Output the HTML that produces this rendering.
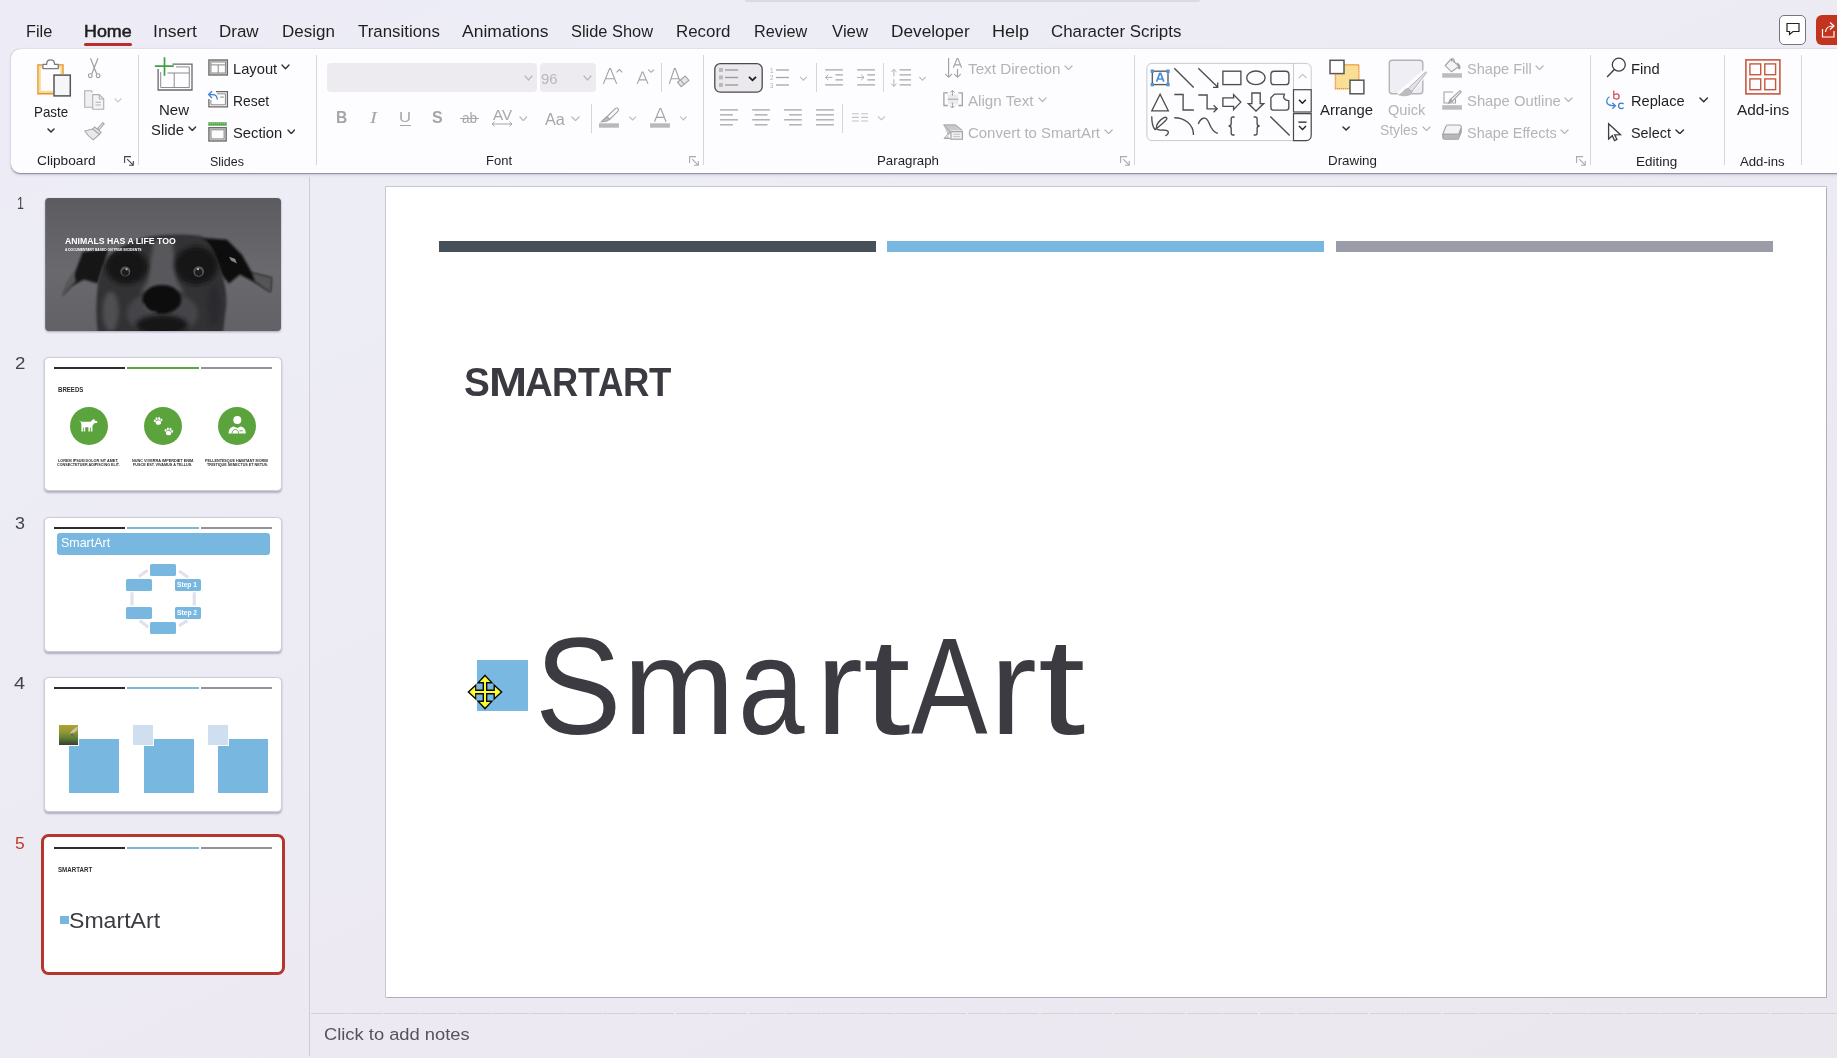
<!DOCTYPE html>
<html lang="en"><head><meta charset="utf-8"><title>PowerPoint</title>
<style>
html,body{margin:0;padding:0}
body{width:1837px;height:1058px;overflow:hidden;position:relative;background:linear-gradient(155deg,#edecf6 0%,#ededf6 22%,#ece9f2 62%,#eae7ef 100%);font-family:"Liberation Sans",sans-serif}
.b{position:absolute;display:block}
.l{display:inline-block;font-style:normal;transform-origin:0 0;line-height:1;vertical-align:baseline}
.t{position:absolute;white-space:nowrap;line-height:1;transform-origin:0 0;display:block}
</style></head>
<body>
<!-- s_ribbon -->
<div class="b" style="left:745.00px;top:0.00px;width:455.00px;height:2.00px;background:#dcd9e3;border-radius:0 0 3px 3px;"></div>
<span class="t" style="left:26.09px;top:23.00px;font-size:17.20px;color:#1f1f1f;transform:scaleX(0.9514);">File</span>
<span class="t" style="left:83.57px;top:23.00px;font-size:17.20px;color:#1f1f1f;transform:scaleX(1.0392);-webkit-text-stroke:.55px #1f1f1f;">Home</span>
<span class="t" style="left:152.62px;top:23.00px;font-size:17.20px;color:#1f1f1f;transform:scaleX(1.0226);">Insert</span>
<span class="t" style="left:219.34px;top:23.00px;font-size:17.20px;color:#1f1f1f;transform:scaleX(0.9875);">Draw</span>
<span class="t" style="left:282.24px;top:23.00px;font-size:17.20px;color:#1f1f1f;transform:scaleX(0.9883);">Design</span>
<span class="t" style="left:357.66px;top:23.00px;font-size:17.20px;color:#1f1f1f;transform:scaleX(0.9811);">Transitions</span>
<span class="t" style="left:462.00px;top:23.00px;font-size:17.20px;color:#1f1f1f;transform:scaleX(1.0183);">Animations</span>
<span class="t" style="left:570.86px;top:23.00px;font-size:17.20px;color:#1f1f1f;transform:scaleX(0.9541);">Slide Show</span>
<span class="t" style="left:675.65px;top:23.00px;font-size:17.20px;color:#1f1f1f;transform:scaleX(0.9816);">Record</span>
<span class="t" style="left:753.70px;top:23.00px;font-size:17.20px;color:#1f1f1f;transform:scaleX(0.9448);">Review</span>
<span class="t" style="left:831.92px;top:23.00px;font-size:17.20px;color:#1f1f1f;transform:scaleX(0.9758);">View</span>
<span class="t" style="left:890.62px;top:23.00px;font-size:17.20px;color:#1f1f1f;transform:scaleX(1.0038);">Developer</span>
<span class="t" style="left:991.55px;top:23.00px;font-size:17.20px;color:#1f1f1f;transform:scaleX(1.0516);">Help</span>
<span class="t" style="left:1051.16px;top:23.00px;font-size:17.20px;color:#1f1f1f;transform:scaleX(0.9817);">Character Scripts</span>
<div class="b" style="left:84.00px;top:43.00px;width:48.00px;height:2.80px;background:#b5302a;border-radius:1.5px;"></div>
<div class="b" style="left:1779.00px;top:15.00px;width:27.00px;height:30.00px;background:#fff;border:1px solid #77757c;border-radius:5px;box-sizing:border-box;"></div>
<svg class="b" style="left:1785.00px;top:21.00px;" width="16" height="16" viewBox="0 0 16 16"><path d="M2 2.5h12v8H8L4.5 13.5V10.5H2z" fill="none" stroke="#222" stroke-width="1.2" stroke-linejoin="miter"/></svg>
<div class="b" style="left:1816.00px;top:15.00px;width:30.00px;height:30.00px;background:#c2341f;border-radius:6px;"></div>
<svg class="b" style="left:1820.00px;top:21.00px;" width="18" height="18" viewBox="0 0 18 18"><path d="M2.5 8v8h11.5V10" fill="none" stroke="#fff" stroke-width="1.2"/><path d="M5.5 11c.5-4 3-6 7-6M10 1.5l4 3.5-4 3.5" fill="none" stroke="#fff" stroke-width="1.2" stroke-linejoin="round"/></svg>
<div class="b" style="left:11.20px;top:49.20px;width:1840.00px;height:124.20px;background:#fdfcfe;border-radius:9px 0 0 9px;box-shadow:0 .5px 1px rgba(40,35,55,.38),0 1.5px 3px rgba(90,80,110,.22);"></div>
<div class="b" style="left:138.00px;top:55.30px;width:1.00px;height:110.20px;background:#d6d4da;"></div>
<div class="b" style="left:316.00px;top:55.30px;width:1.00px;height:110.20px;background:#d6d4da;"></div>
<div class="b" style="left:703.10px;top:55.30px;width:1.00px;height:110.20px;background:#d6d4da;"></div>
<div class="b" style="left:1134.30px;top:55.30px;width:1.00px;height:110.20px;background:#d6d4da;"></div>
<div class="b" style="left:1589.90px;top:55.30px;width:1.00px;height:110.20px;background:#d6d4da;"></div>
<div class="b" style="left:1724.00px;top:55.30px;width:1.00px;height:110.20px;background:#d6d4da;"></div>
<div class="b" style="left:1800.90px;top:55.30px;width:1.00px;height:110.20px;background:#d6d4da;"></div>
<div class="b" style="left:660.90px;top:63.20px;width:1.00px;height:29.20px;background:#d6d4da;"></div>
<div class="b" style="left:816.00px;top:63.20px;width:1.00px;height:29.20px;background:#d6d4da;"></div>
<div class="b" style="left:883.00px;top:63.20px;width:1.00px;height:29.20px;background:#d6d4da;"></div>
<div class="b" style="left:591.30px;top:103.60px;width:1.00px;height:29.20px;background:#d6d4da;"></div>
<div class="b" style="left:842.10px;top:103.60px;width:1.00px;height:29.20px;background:#d6d4da;"></div>
<span class="t" style="left:36.81px;top:155.00px;font-size:12.60px;color:#1f1f1f;transform:scaleX(1.0881);">Clipboard</span>
<span class="t" style="left:209.94px;top:156.00px;font-size:12.60px;color:#1f1f1f;transform:scaleX(0.9872);">Slides</span>
<span class="t" style="left:486.26px;top:155.00px;font-size:12.60px;color:#1f1f1f;transform:scaleX(1.0320);">Font</span>
<span class="t" style="left:877.34px;top:155.00px;font-size:12.60px;color:#1f1f1f;transform:scaleX(1.0541);">Paragraph</span>
<span class="t" style="left:1327.53px;top:155.00px;font-size:12.60px;color:#1f1f1f;transform:scaleX(1.0597);">Drawing</span>
<span class="t" style="left:1636.32px;top:156.00px;font-size:12.60px;color:#1f1f1f;transform:scaleX(1.0691);">Editing</span>
<span class="t" style="left:1740.30px;top:156.00px;font-size:12.60px;color:#1f1f1f;transform:scaleX(1.0456);">Add-ins</span>
<svg class="b" style="left:124.00px;top:156.00px;" width="10" height="10" viewBox="0 0 10 10"><path d="M.6 7V.6H7M3.2 3.2l6 6M9.3 5v4.3H5" fill="none" stroke="#444" stroke-width="1.1"/></svg>
<svg class="b" style="left:689.30px;top:156.00px;" width="10" height="10" viewBox="0 0 10 10"><path d="M.6 7V.6H7M3.2 3.2l6 6M9.3 5v4.3H5" fill="none" stroke="#aaa" stroke-width="1.1"/></svg>
<svg class="b" style="left:1120.00px;top:156.00px;" width="10" height="10" viewBox="0 0 10 10"><path d="M.6 7V.6H7M3.2 3.2l6 6M9.3 5v4.3H5" fill="none" stroke="#aaa" stroke-width="1.1"/></svg>
<svg class="b" style="left:1576.30px;top:156.00px;" width="10" height="10" viewBox="0 0 10 10"><path d="M.6 7V.6H7M3.2 3.2l6 6M9.3 5v4.3H5" fill="none" stroke="#aaa" stroke-width="1.1"/></svg>
<span class="t" style="left:33.93px;top:105.00px;font-size:14.30px;color:#1f1f1f;transform:scaleX(0.9324);">Paste</span>
<svg class="b" style="left:46.50px;top:128.00px;" width="8" height="5" viewBox="0 0 8 5"><path d="M1 1 L4.00 4.00 L7.00 1" fill="none" stroke="#333" stroke-width="1.5" stroke-linecap="round" stroke-linejoin="round"/></svg>
<span class="t" style="left:159.40px;top:103.00px;font-size:14.30px;color:#1f1f1f;transform:scaleX(1.0499);">New</span>
<span class="t" style="left:150.93px;top:123.00px;font-size:14.30px;color:#1f1f1f;transform:scaleX(1.0383);">Slide</span>
<svg class="b" style="left:188.40px;top:125.80px;" width="8.6" height="5.6" viewBox="0 0 8.6 5.6"><path d="M1 1 L4.30 4.60 L7.60 1" fill="none" stroke="#333" stroke-width="1.4" stroke-linecap="round" stroke-linejoin="round"/></svg>
<span class="t" style="left:232.62px;top:62.00px;font-size:14.30px;color:#1f1f1f;transform:scaleX(1.0292);">Layout</span>
<svg class="b" style="left:281.00px;top:64.30px;" width="9" height="5.7" viewBox="0 0 9 5.7"><path d="M1 1 L4.50 4.70 L8.00 1" fill="none" stroke="#333" stroke-width="1.4" stroke-linecap="round" stroke-linejoin="round"/></svg>
<span class="t" style="left:232.69px;top:94.00px;font-size:14.30px;color:#1f1f1f;transform:scaleX(0.9693);">Reset</span>
<span class="t" style="left:233.14px;top:126.00px;font-size:14.30px;color:#1f1f1f;transform:scaleX(1.0321);">Section</span>
<svg class="b" style="left:286.50px;top:128.50px;" width="8.5" height="5.7" viewBox="0 0 8.5 5.7"><path d="M1 1 L4.25 4.70 L7.50 1" fill="none" stroke="#333" stroke-width="1.4" stroke-linecap="round" stroke-linejoin="round"/></svg>
<div class="b" style="left:327.40px;top:63.00px;width:209.60px;height:29.30px;background:#edebf0;border-radius:4px;"></div>
<div class="b" style="left:539.50px;top:63.00px;width:56.50px;height:29.30px;background:#edebf0;border-radius:4px;"></div>
<svg class="b" style="left:523.70px;top:75.20px;" width="9" height="6" viewBox="0 0 9 6"><path d="M1 1 L4.50 5.00 L8.00 1" fill="none" stroke="#b8b8b8" stroke-width="1.2" stroke-linecap="round" stroke-linejoin="round"/></svg>
<span class="t" style="left:540.63px;top:72.00px;font-size:14.60px;color:#b8b8b8;transform:scaleX(1.0224);">96</span>
<svg class="b" style="left:583.00px;top:75.20px;" width="9" height="6" viewBox="0 0 9 6"><path d="M1 1 L4.50 5.00 L8.00 1" fill="none" stroke="#b8b8b8" stroke-width="1.2" stroke-linecap="round" stroke-linejoin="round"/></svg>
<span class="t" style="left:336.49px;top:110.00px;font-size:16.00px;color:#a6a6a6;font-weight:700;transform:scaleX(0.9734);">B</span>
<span class="t" style="left:369.80px;top:109.00px;font-size:17.00px;color:#a6a6a6;font-style:italic;font-family:'Liberation Serif',serif;transform:scaleX(1.2235);">I</span>
<span class="t" style="left:399.25px;top:109.00px;font-size:15.50px;color:#a6a6a6;transform:scaleX(1.0753);">U</span>
<div class="b" style="left:400.00px;top:124.50px;width:10.80px;height:1.20px;background:#a6a6a6;"></div>
<span class="t" style="left:431.92px;top:109.00px;font-size:17.00px;color:#a6a6a6;font-weight:700;transform:scaleX(0.9412);">S</span>
<span class="t" style="left:462.46px;top:111.00px;font-size:14.00px;color:#a6a6a6;transform:scaleX(0.9709);">ab</span>
<div class="b" style="left:460.30px;top:118.30px;width:19.20px;height:1.10px;background:#a6a6a6;"></div>
<span class="t" style="left:492.50px;top:108.00px;font-size:14.50px;color:#a6a6a6;transform:scaleX(1.0441);">AV</span>
<svg class="b" style="left:491.00px;top:121.00px;" width="22" height="6" viewBox="0 0 22 6"><path d="M1 3h20M3.5 .7L1 3l2.5 2.3M18.5 .7L21 3l-2.5 2.3" fill="none" stroke="#a6a6a6" stroke-width="1"/></svg>
<svg class="b" style="left:519.40px;top:115.60px;" width="8.6" height="5.6" viewBox="0 0 8.6 5.6"><path d="M1 1 L4.30 4.60 L7.60 1" fill="none" stroke="#b8b8b8" stroke-width="1.2" stroke-linecap="round" stroke-linejoin="round"/></svg>
<span class="t" style="left:544.80px;top:111.00px;font-size:16.50px;color:#a6a6a6;transform:scaleX(0.9786);">Aa</span>
<svg class="b" style="left:571.00px;top:115.60px;" width="9" height="5.6" viewBox="0 0 9 5.6"><path d="M1 1 L4.50 4.60 L8.00 1" fill="none" stroke="#b8b8b8" stroke-width="1.2" stroke-linecap="round" stroke-linejoin="round"/></svg>
<span class="t" style="left:770.12px;top:68.00px;font-size:6.60px;color:#b0b0b0;transform:scaleX(0.9753);">1</span>
<span class="t" style="left:770.29px;top:75.00px;font-size:6.60px;color:#b0b0b0;transform:scaleX(0.9324);">2</span>
<span class="t" style="left:770.36px;top:83.00px;font-size:6.60px;color:#b0b0b0;transform:scaleX(0.8931);">3</span>
<span class="t" style="left:968.09px;top:62.00px;font-size:14.30px;color:#b4b4b4;transform:scaleX(1.0671);">Text Direction</span>
<svg class="b" style="left:1064.00px;top:64.80px;" width="9" height="5.6" viewBox="0 0 9 5.6"><path d="M1 1 L4.50 4.60 L8.00 1" fill="none" stroke="#b4b4b4" stroke-width="1.2" stroke-linecap="round" stroke-linejoin="round"/></svg>
<span class="t" style="left:968.40px;top:94.00px;font-size:14.30px;color:#b4b4b4;transform:scaleX(1.0611);">Align Text</span>
<svg class="b" style="left:1038.00px;top:97.00px;" width="9" height="5.6" viewBox="0 0 9 5.6"><path d="M1 1 L4.50 4.60 L8.00 1" fill="none" stroke="#b4b4b4" stroke-width="1.2" stroke-linecap="round" stroke-linejoin="round"/></svg>
<span class="t" style="left:967.65px;top:126.00px;font-size:14.30px;color:#b4b4b4;transform:scaleX(1.0450);">Convert to SmartArt</span>
<svg class="b" style="left:1103.80px;top:128.80px;" width="9.2" height="5.6" viewBox="0 0 9.2 5.6"><path d="M1 1 L4.60 4.60 L8.20 1" fill="none" stroke="#b4b4b4" stroke-width="1.2" stroke-linecap="round" stroke-linejoin="round"/></svg>
<span class="t" style="left:1320.40px;top:103.00px;font-size:14.30px;color:#1f1f1f;transform:scaleX(1.0420);">Arrange</span>
<svg class="b" style="left:1342.20px;top:126.30px;" width="8.2" height="5.1" viewBox="0 0 8.2 5.1"><path d="M1 1 L4.10 4.10 L7.20 1" fill="none" stroke="#333" stroke-width="1.5" stroke-linecap="round" stroke-linejoin="round"/></svg>
<span class="t" style="left:1387.74px;top:103.00px;font-size:14.30px;color:#b4b4b4;transform:scaleX(1.0197);">Quick</span>
<span class="t" style="left:1380.28px;top:123.00px;font-size:14.30px;color:#b4b4b4;transform:scaleX(0.9677);">Styles</span>
<svg class="b" style="left:1422.00px;top:125.80px;" width="9" height="5.6" viewBox="0 0 9 5.6"><path d="M1 1 L4.50 4.60 L8.00 1" fill="none" stroke="#b4b4b4" stroke-width="1.2" stroke-linecap="round" stroke-linejoin="round"/></svg>
<span class="t" style="left:1466.74px;top:62.00px;font-size:14.30px;color:#b4b4b4;transform:scaleX(1.0195);">Shape Fill</span>
<svg class="b" style="left:1535.40px;top:64.80px;" width="9.1" height="5.6" viewBox="0 0 9.1 5.6"><path d="M1 1 L4.55 4.60 L8.10 1" fill="none" stroke="#b4b4b4" stroke-width="1.2" stroke-linecap="round" stroke-linejoin="round"/></svg>
<span class="t" style="left:1466.73px;top:94.00px;font-size:14.30px;color:#b4b4b4;transform:scaleX(1.0358);">Shape Outline</span>
<svg class="b" style="left:1564.00px;top:97.00px;" width="9" height="5.6" viewBox="0 0 9 5.6"><path d="M1 1 L4.50 4.60 L8.00 1" fill="none" stroke="#b4b4b4" stroke-width="1.2" stroke-linecap="round" stroke-linejoin="round"/></svg>
<span class="t" style="left:1466.75px;top:126.00px;font-size:14.30px;color:#b4b4b4;transform:scaleX(1.0096);">Shape Effects</span>
<svg class="b" style="left:1560.00px;top:128.80px;" width="9" height="5.6" viewBox="0 0 9 5.6"><path d="M1 1 L4.50 4.60 L8.00 1" fill="none" stroke="#b4b4b4" stroke-width="1.2" stroke-linecap="round" stroke-linejoin="round"/></svg>
<span class="t" style="left:1630.52px;top:62.00px;font-size:14.30px;color:#1f1f1f;transform:scaleX(1.0334);">Find</span>
<span class="t" style="left:1630.53px;top:94.00px;font-size:14.30px;color:#1f1f1f;transform:scaleX(1.0238);">Replace</span>
<svg class="b" style="left:1698.60px;top:97.00px;" width="9.4" height="5.8" viewBox="0 0 9.4 5.8"><path d="M1 1 L4.70 4.80 L8.40 1" fill="none" stroke="#333" stroke-width="1.5" stroke-linecap="round" stroke-linejoin="round"/></svg>
<span class="t" style="left:1631.05px;top:126.00px;font-size:14.30px;color:#1f1f1f;transform:scaleX(1.0060);">Select</span>
<svg class="b" style="left:1675.00px;top:128.80px;" width="9.5" height="5.7" viewBox="0 0 9.5 5.7"><path d="M1 1 L4.75 4.70 L8.50 1" fill="none" stroke="#333" stroke-width="1.5" stroke-linecap="round" stroke-linejoin="round"/></svg>
<span class="t" style="left:1737.20px;top:103.00px;font-size:14.30px;color:#1f1f1f;transform:scaleX(1.0755);">Add-ins</span>
<!-- s_icons -->
<svg class="b" style="left:0;top:0" width="1837" height="180" viewBox="0 0 1837 180" fill="none" stroke-linecap="butt">
<path d="M42.500 64.900H38V93.700H53" stroke="#e8902c" stroke-width="1.5"/><path d="M43 66.700H39.800V91.900H53" stroke="#f8dc8e" stroke-width="2.1"/><path d="M58.500 64.900H62.900V74" stroke="#e8902c" stroke-width="1.500"/><path d="M58.500 66.700H61.200V74" stroke="#f8dc8e" stroke-width="2"/>
<path d="M42.900 68.600V64.400H46.600C46.600 61.600 48.300 59.900 50.600 59.900C52.900 59.900 54.600 61.600 54.600 64.400H58.300V68.600Z" fill="#fdfcfe" stroke="#7c7c7c" stroke-width="1.300" stroke-linejoin="round"/>
<rect x="54" y="75.100" width="16.300" height="20.800" fill="#f6f5f8" stroke="#555" stroke-width="1.500"/>
<g stroke="#9a9a9a" stroke-width="1.100"><path d="M90.500 58.300L96.600 73.800M98 58.300L91.900 73.800"/><circle cx="90.300" cy="75.700" r="1.900"/><circle cx="98.100" cy="75.700" r="1.900"/></g>
<g stroke="#b0b0b0" stroke-width="1.100"><path d="M92.200 107.300H84.700V90.800H91.200L92.600 92.200" fill="#f0eff2"/><path d="M92.700 94.600H99.300L103.700 99V109.300H92.700Z" fill="#f4f3f6"/><path d="M99.300 94.600V99H103.700M95.500 102.300H100.800M95.500 105H100.800"/></g>
<path d="M114.600 98.500L118 101.800L121.400 98.500" stroke="#c4c4c4" stroke-width="1.100"/>
<g stroke="#a8a8a8" stroke-width="1.100" fill="#e9e8ec"><path d="M103 122.600L104.200 123.800L99.200 129.800L97.600 128.400Z"/><path d="M94.600 127L101.200 132.300L99.300 134.400L92.800 129Z"/><path d="M92.800 129L84.800 131C87 134.500 90 137.800 93.200 139.800L99.300 134.400Z"/></g>
<g><path d="M172.500 64.100H192V90H158.100V69" stroke="#6a6a6a" stroke-width="1.300"/><path d="M176 66.900H189.300V87.500H160.700V72" stroke="#8d8d8d" stroke-width="1"/><path d="M167.500 73H189.300M174.200 73V87.500" stroke="#8d8d8d" stroke-width="1"/><path d="M154.900 66.200H173.800M164.500 57.200V75.800" stroke="#3f9e46" stroke-width="1.700"/></g>
<g><rect x="208.900" y="60" width="18.500" height="15" stroke="#666" stroke-width="1.300" fill="#d9d9db"/><rect x="210.900" y="62" width="14.500" height="11" stroke="#8a8a8a" stroke-width="1" fill="#fdfcfe"/><path d="M211 64.900H225.400M218.200 64.900V73" stroke="#8a8a8a" stroke-width="1"/></g>
<g><path d="M216 91.700H227.400V106.800H208.900V99" stroke="#666" stroke-width="1.300"/><path d="M217 93.800H225.400V104.800H210.900V100" stroke="#8a8a8a" stroke-width="1"/><path d="M220.200 97.100H223.800" stroke="#8a8a8a" stroke-width="1"/><path d="M208.700 94.600H212.500C215.600 94.600 217.300 96.600 217.300 99.600M212 91.200L208.600 94.600L212 98" stroke="#3d7fd0" stroke-width="1.300"/></g>
<g><rect x="208.200" y="122.200" width="18.600" height="3.500" fill="#55ab53"/><path d="M208.200 123.200H226.800" stroke="#bfe0a0" stroke-width=".8" stroke-dasharray="1 1"/><rect x="208.900" y="127.700" width="17.300" height="13.300" stroke="#666" stroke-width="1.300" fill="#d9d9db"/><rect x="211" y="129.800" width="13.100" height="9.100" stroke="#8a8a8a" stroke-width="1" fill="#fdfcfe"/></g>
<g stroke="#a3a3a3" stroke-width="1.150"><path d="M603.400 83.900L609.600 68.500H610.500L616.700 83.900M605.500 78.700H614.600"/><path d="M616.500 72.300L619.400 69.600L622.300 72.300"/><path d="M637.200 83.900L642.200 72H643L648 83.900M639 79.800H646.200"/><path d="M648.200 69.600L651.100 72.300L654 69.600"/><path d="M669.300 83.900L674.400 68.500H675.300L680.200 82M671.200 78.700H679"/><path d="M677.600 82.300L685.300 76L688.900 80.400L681.200 86.700Z" fill="#e6e5e9"/><path d="M680.500 80L684.100 84.400"/><path d="M615.200 108.700C616.300 107.700 617.500 108 618 108.600C618.600 109.300 618.700 110.400 617.800 111.300L609.600 119.400L607 116.800Z"/><path d="M607 116.800L609.600 119.400L606.400 121.300L601.500 121.800L605.300 118Z" fill="#bdbdbd"/><path d="M654.500 121.700L659.900 108.500H660.800L666.100 121.700M656.400 117.300H664.300"/></g>
<rect x="599" y="123.300" width="19.900" height="4.400" fill="#b9b9b9"/><rect x="650" y="123.300" width="19.900" height="4.400" fill="#b9b9b9"/>
<path d="M629.200 116.600L632.600 119.900L636 116.600M680.200 116.600L683.400 119.900L686.600 116.600" stroke="#bcbcbc" stroke-width="1.100"/>
<rect x="714.800" y="63.600" width="47.400" height="28.600" rx="5.500" fill="#ebe8ee" stroke="#4a4a4a" stroke-width="1.300"/>
<rect x="719" y="68.0" width="3.900" height="3.900" fill="#b9b9bb"/><path d="M725 70.0H738.100" stroke="#9c9c9c" stroke-width="1.400"/><rect x="719" y="75.5" width="3.900" height="3.900" fill="#b9b9bb"/><path d="M725 77.5H738.100" stroke="#9c9c9c" stroke-width="1.400"/><rect x="719" y="83.0" width="3.900" height="3.900" fill="#b9b9bb"/><path d="M725 85.0H738.100" stroke="#9c9c9c" stroke-width="1.400"/><path d="M749 76.900L752.500 80.300L756 76.900" stroke="#1a1a1a" stroke-width="1.800"/>
<path d="M776 70.0H789" stroke="#a6a6a6" stroke-width="1.300"/><path d="M776 77.5H789" stroke="#a6a6a6" stroke-width="1.300"/><path d="M776 85.0H789" stroke="#a6a6a6" stroke-width="1.300"/><path d="M800 76.800L803.400 80.200L806.800 76.800" stroke="#bcbcbc" stroke-width="1.100"/>
<g stroke="#a6a6a6" stroke-width="1.300"><path d="M825.200 69.900H842.900M835.400 74.800H842.900M835.400 79.800H842.900M825.200 84.900H842.900"/><path d="M857.100 69.900H875M867.300 74.800H875M867.300 79.800H875M857.100 84.900H875"/><path d="M899.600 69.900H911M899.600 74.800H911M899.600 79.800H911M899.600 84.900H911"/></g><g stroke="#b0b0b0" stroke-width="1"><path d="M825.600 77.400H832.400M828.400 74.600L825.600 77.400L828.400 80.200"/><path d="M857.100 77.400H864M861.200 74.600L864 77.400L861.200 80.200"/><path d="M893.900 69.300V76.300M891.300 71.900L893.900 69.300L896.500 71.900M893.900 79.200V86.300M891.300 83.700L893.900 86.300L896.500 83.700"/></g>
<path d="M919.200 76.800L922.500 80.100L925.800 76.800" stroke="#bcbcbc" stroke-width="1.100"/>
<g stroke="#a6a6a6" stroke-width="1.300"><path d="M720 109.90H738.0"/><path d="M752.2 109.90H769.9"/><path d="M784.1 109.90H801.800"/><path d="M816 109.90H833.900"/><path d="M720 114.85H732.9"/><path d="M754.6 114.85H767.5"/><path d="M789.1 114.85H801.800"/><path d="M816 114.85H833.900"/><path d="M720 119.80H738.0"/><path d="M752.2 119.80H769.9"/><path d="M784.1 119.80H801.800"/><path d="M816 119.80H833.900"/><path d="M720 124.80H732.9"/><path d="M754.6 124.80H767.5"/><path d="M789.1 124.80H801.800"/><path d="M816 124.80H833.900"/></g>
<g stroke="#c2c2c2" stroke-width="1.100"><path d="M852 113.7H858.800M861.200 113.7H867.900"/><path d="M852 117.4H858.800M861.200 117.4H867.900"/><path d="M852 121.0H858.800M861.200 121.0H867.900"/><path d="M878 116.500L881.400 119.800L884.800 116.500"/></g>
<g stroke="#a3a3a3" stroke-width="1.150"><path d="M948.600 58V77.300M945.200 73.900L948.600 77.300L952 73.900"/><path d="M953.300 67.800L957.100 58.600H957.900L961.600 67.800M954.600 64.800H960.400"/><path d="M957.500 69V77.300M954.300 74.100L957.500 77.300L960.700 74.100"/><rect x="947.800" y="94.300" width="10.600" height="10" fill="#eceaef" stroke="none"/><path d="M947.800 92.900H943.900V105.500H947.800M958.400 92.900H962.300V105.500H958.400" stroke-width="1.300"/><path d="M947.800 99.200H958.400M952.400 90.400V95.800M950.200 92.600L952.400 90.400L954.600 92.600M952.400 102.600V108M950.200 105.800L952.400 108L954.600 105.800" stroke-width="1"/><path d="M943.500 124.800H955.500L962.500 130.500H950.600V133.500L943.800 139H949.500" fill="#c9c9cb" stroke="none"/><path d="M943.600 124.900H955.500L962.300 130.400M943.600 124.900L950.300 131.700L944 138.400H950" stroke-width="1"/><rect x="950.900" y="131.700" width="11.500" height="7.500" fill="#f2f1f4" stroke-width="1.200"/><path d="M953.200 134.300H960.200M953.200 136.600H960.200" stroke-width=".9" stroke="#bdbdbd"/></g>
<rect x="1146.900" y="63.400" width="164.300" height="77.200" rx="5" fill="#fdfcfe" stroke="#cbc8d0" stroke-width="1"/>
<path d="M1293.500 63.400V89.400" stroke="#cbc8d0" stroke-width="1"/><rect x="1293.500" y="89.700" width="17.700" height="22.300" fill="#fdfcfe" stroke="#4a4a4a" stroke-width="1.200"/><path d="M1293.500 113.700H1311.200V135.600C1311.200 138.400 1309 140.600 1306.200 140.600H1293.500Z" fill="#fdfcfe" stroke="#4a4a4a" stroke-width="1.200"/><path d="M1298.700 78L1302.600 74.300L1306.500 78" stroke="#c6c6c6" stroke-width="1.100"/><path d="M1299 99.800L1302.400 103.200L1305.800 99.800" stroke="#1e1e1e" stroke-width="1.500"/><path d="M1298.400 122.200H1306.600M1299 126L1302.500 129.500L1306 126" stroke="#1e1e1e" stroke-width="1.300"/>
<g stroke="#4d4d4d" stroke-width="1.350" stroke-linejoin="miter"><rect x="1152.300" y="71.200" width="15.700" height="13.400" stroke="#5a5a5a"/><path d="M1174.300 68.300L1193.700 87.400"/><path d="M1198.300 68.300L1217.600 87.100M1217.700 82.500V87.300H1213"/><rect x="1222.900" y="71.200" width="18" height="13.400"/><ellipse cx="1255.900" cy="77.800" rx="9.200" ry="6.800"/><rect x="1270.900" y="71.200" width="18" height="13.400" rx="3.200"/><path d="M1160.100 94.300L1168.300 110.800H1151.800Z"/><path d="M1174.300 94.500H1183.100V110H1193.900"/><path d="M1198.300 95H1207.100V108.800H1217M1213.600 105.300L1217.200 108.800L1213.600 112.300"/><path d="M1222.900 97.900H1233.600V94.600L1240.800 102.100L1233.600 109.600V106.300H1222.900Z"/><path d="M1251.900 93H1260.200V103.600H1263.700L1256 111L1248.300 103.600H1251.900Z"/><path d="M1274.500 94.100H1284.500C1282.500 97.500 1284.500 100.600 1288.800 100.600V107.500C1288.800 109.100 1287.700 110.100 1286.200 110.100H1273.300C1271.800 110.100 1270.900 109.100 1270.900 107.500V97.800Z" stroke-linejoin="round"/><path d="M1151.800 116.800C1151.600 121 1152.600 127.500 1155.200 129.600C1158.500 127 1164.500 122 1166.600 119.400C1167.600 117.800 1166 116.600 1164 117.600C1160 119.600 1155.800 124.500 1156.400 128.200C1157 131.500 1162 129.200 1166.200 130.400C1169.600 131.400 1168.600 134.400 1165.800 135.600" stroke-linecap="round" stroke-linejoin="round"/><path d="M1174.300 117.700C1184.500 117.700 1193.500 124 1193.500 135"/><path d="M1198.300 124C1200.500 118.500 1205.500 114.500 1209 123C1211.500 129.500 1214 132.500 1217.900 133.300"/><path d="M1234.600 117H1233C1231.700 117 1231.200 117.800 1231.200 119V123.500C1231.200 125 1230.400 126 1228.600 126C1230.400 126 1231.200 127 1231.200 128.500V133C1231.200 134.200 1231.700 135 1233 135H1234.600"/><path d="M1253.700 117H1255.300C1256.600 117 1257.100 117.800 1257.100 119V123.500C1257.100 125 1257.900 126 1259.700 126C1257.900 126 1257.100 127 1257.100 128.500V133C1257.100 134.200 1256.600 135 1255.300 135H1253.700"/><path d="M1270.300 116.600L1289.700 135.400"/></g>
<rect x="1150.6" y="69.5" width="3.400" height="3.400" fill="#4f95dc"/><rect x="1166.3" y="69.5" width="3.400" height="3.400" fill="#4f95dc"/><rect x="1150.6" y="82.9" width="3.400" height="3.400" fill="#4f95dc"/><rect x="1166.3" y="82.9" width="3.400" height="3.400" fill="#4f95dc"/><path d="M1156.600 81.600L1159.700 73.400H1160.700L1163.800 81.600M1157.700 79H1162.700" stroke="#4a8fd8" stroke-width="1.700"/>
<rect x="1335.400" y="64.700" width="23.500" height="24" fill="#f9de95" stroke="#e9892f" stroke-width="1.400" stroke-dasharray="1.300 .7"/><rect x="1330" y="60.300" width="14" height="13.300" fill="#fdfcfe" stroke="#585858" stroke-width="1.500"/><rect x="1350" y="80.200" width="13.900" height="13.600" fill="#fdfcfe" stroke="#585858" stroke-width="1.500"/>
<rect x="1389.300" y="60.300" width="33.500" height="33.500" rx="3" fill="#efeef4" stroke="#b4b4b6" stroke-width="1.400"/><path d="M1397 96.500L1398 92.500L1404 86.500L1424 69.500L1428.500 70.500L1427 75L1412.500 93L1406 97.500Z" fill="#fdfcfe" stroke="none"/><path d="M1425.200 72.300C1426.300 71.500 1426.900 72.100 1426.200 73.200L1412.200 91.300C1410.700 91.200 1408.900 89.700 1408.400 88.200Z" fill="#e2e1e5" stroke="#b3b3b5" stroke-width="1"/><path d="M1408.400 88.200C1408.900 89.700 1410.700 91.200 1412.200 91.300C1412.400 94.800 1406.500 97.200 1398.600 94.800C1403 93.600 1402.800 89.500 1408.400 88.200Z" fill="#bdbdbf" stroke="#b0b0b2" stroke-width=".8"/>
<g stroke="#a3a3a3" stroke-width="1.100"><path d="M1451.200 58.800L1459 66.400L1451.400 71.800L1445.200 65.600Z" fill="#f3f2f5"/><path d="M1451.500 61.500C1451 59 1452.800 57.900 1453.800 59.300C1454.400 60.300 1454.400 62 1454.300 63"/><path d="M1457.500 63.500C1459 64 1460 65.500 1460 67.800C1460 69.200 1458.600 69.200 1458.500 67.800C1458.400 66.500 1458.500 65.500 1457.500 63.500Z" fill="#a8a8a8"/><path d="M1453 92H1444V103H1455.500V99" /><path d="M1459.400 91.200C1460.300 90.400 1461.500 91.500 1460.800 92.500L1452.500 101L1448.800 102.800L1450.500 99.300Z" fill="#f3f2f5"/><path d="M1448.800 102.800L1450.500 99.300L1452.500 101Z" fill="#a8a8a8"/><path d="M1447.500 125H1458.500C1460.500 125 1461.800 126.500 1461.200 128.300L1458.800 134.300H1442.800L1446 126.300C1446.300 125.500 1446.800 125 1447.500 125Z" fill="#f3f2f5"/><path d="M1442.800 134.300H1458.800L1461.200 128.300V132.300L1458.300 139.200H1444.500C1443.300 139.200 1442.800 138.500 1442.800 137.500Z" fill="#b8b8ba"/></g>
<rect x="1442.200" y="73.200" width="19.700" height="4.500" fill="#bcbcbc"/><rect x="1442.200" y="105.200" width="19.700" height="4.500" fill="#bcbcbc"/>
<circle cx="1618.800" cy="64.700" r="6.500" stroke="#3f3f3f" stroke-width="1.300"/><path d="M1614.300 69.500L1607.100 77" stroke="#3f3f3f" stroke-width="1.400"/>
<path d="M1613.800 90.500V98.800M1613.800 95.200C1614.600 94.200 1615.500 93.800 1616.500 93.800C1618.200 93.800 1619.100 95 1619.100 96.400C1619.100 97.800 1618.200 99 1616.500 99C1615.500 99 1614.600 98.600 1613.800 97.600" stroke="#d24b5c" stroke-width="1.250"/><path d="M1623.600 104C1622.900 103.300 1622.100 103 1621.200 103C1619.600 103 1618.600 104.200 1618.600 105.800C1618.600 107.400 1619.600 108.600 1621.200 108.600C1622.100 108.600 1622.900 108.300 1623.600 107.600" stroke="#2e7dd1" stroke-width="1.250"/><path d="M1609.500 96.800C1606.500 98.500 1606 102 1607.800 104C1609 105.400 1611 105.700 1615 105.700M1612.300 102.700L1615.400 105.700L1612.300 108.700" stroke="#3a84d6" stroke-width="1.250"/>
<path d="M1608.600 123.800V139L1612.300 135.700L1614.500 140.600L1616.900 139.500L1614.700 134.800L1620.500 134.700Z" fill="#fdfcfe" stroke="#3f3f3f" stroke-width="1.300" stroke-linejoin="miter"/>
<g stroke="#c8573d"><rect x="1745.900" y="59.900" width="34" height="34" stroke-width="1.600"/><rect x="1749.900" y="63.900" width="10.800" height="10.800" stroke-width="1.400"/><rect x="1764.800" y="63.900" width="10.800" height="10.800" stroke-width="1.400"/><rect x="1749.900" y="78.900" width="10.800" height="10.800" stroke-width="1.400"/><rect x="1764.800" y="78.900" width="10.800" height="10.800" stroke-width="1.400"/></g>
</svg>
<!-- s_panel -->
<span class="t" style="left:16.97px;top:195.00px;font-size:17.00px;color:#45434a;transform:scaleX(0.7302);">1</span>
<span class="t" style="left:14.67px;top:355.00px;font-size:17.00px;color:#45434a;transform:scaleX(1.0989);">2</span>
<span class="t" style="left:14.88px;top:515.00px;font-size:17.00px;color:#45434a;transform:scaleX(1.0526);">3</span>
<span class="t" style="left:14.30px;top:675.00px;font-size:17.00px;color:#45434a;transform:scaleX(1.1648);">4</span>
<span class="t" style="left:15.20px;top:835.00px;font-size:17.00px;color:#c0392b;transform:scaleX(1.0279);">5</span>
<svg class="b" style="left:44.90px;top:197.80px;filter:drop-shadow(0 1px 1.2px rgba(60,50,80,.4));" width="236.2" height="133" viewBox="0 0 237.4 133.8">
<defs>
<filter id="b1" x="-20%" y="-20%" width="140%" height="140%"><feGaussianBlur stdDeviation="1.1"/></filter>
<filter id="b2" x="-20%" y="-20%" width="140%" height="140%"><feGaussianBlur stdDeviation="2.2"/></filter>
<filter id="b3" x="-20%" y="-20%" width="140%" height="140%"><feGaussianBlur stdDeviation="0.6"/></filter>
<linearGradient id="dg" x1="0" y1="0" x2="0" y2="1"><stop offset="0" stop-color="#5c5b5f"/><stop offset=".55" stop-color="#6a696d"/><stop offset="1" stop-color="#626165"/></linearGradient>
<clipPath id="tc"><rect x="0" y="0" width="237.4" height="133.8" rx="4"/></clipPath>
</defs>
<g clip-path="url(#tc)">
<rect width="237.4" height="133.8" fill="url(#dg)"/>
<!-- ears -->
<path d="M64 51 L38 54 L30 75 L17 99 L26 89 L39 82 L53 86 Z" fill="#161617" filter="url(#b1)"/>
<path d="M17 99 L22 84 L29 74 L31 84 L25 90 Z" fill="#58575b" filter="url(#b1)"/>
<path d="M156 40 L183 42 L198 57 L208 75 L228 80 L227 95 L211 85 L196 77 L185 86 L178 78 Z" fill="#0e0e0f" filter="url(#b1)"/>
<path d="M208 75 L228 80 L227 95 L218 89 L211 84 Z" fill="#555458" filter="url(#b1)"/>
<path d="M185 59 L191 61 L193 66 L187 63 Z" fill="#8a898c" filter="url(#b3)"/>
<!-- head -->
<path d="M103 39 C120 36 140 36 156 38 C166 44 173 56 178 76 C182 90 184 104 181 118 L179 136 L53 136 C51 120 51 104 53 88 C55 72 62 58 73 52 C82 46 92 41 103 39 Z" fill="#333336" filter="url(#b1)"/>
<!-- centre stripe -->
<path d="M109 43 L128 43 L133 84 L140 95 L96 95 L103 84 Z" fill="#59595c" filter="url(#b2)"/>
<!-- eye patches -->
<ellipse cx="82" cy="69" rx="21" ry="17.500" fill="#151516" filter="url(#b2)"/>
<ellipse cx="152" cy="68" rx="21.500" ry="19" fill="#131314" filter="url(#b2)"/>
<!-- eyes -->
<circle cx="80.700" cy="74" r="5" fill="#58575a" filter="url(#b3)"/><circle cx="80.700" cy="74.800" r="3.400" fill="#1d1d1e" filter="url(#b3)"/><circle cx="82" cy="71.800" r="1.100" fill="#b5b5b7" filter="url(#b3)"/>
<circle cx="154.500" cy="74" r="5.300" fill="#58575a" filter="url(#b3)"/><circle cx="154.500" cy="74.800" r="3.600" fill="#1d1d1e" filter="url(#b3)"/><circle cx="153.800" cy="71.600" r="1.100" fill="#b5b5b7" filter="url(#b3)"/>
<!-- muzzle -->
<ellipse cx="118" cy="116" rx="36" ry="22" fill="#454548" filter="url(#b2)"/>
<ellipse cx="66" cy="114" rx="8" ry="20" fill="#505053" filter="url(#b2)"/>
<ellipse cx="170" cy="108" rx="7" ry="22" fill="#2c2c2e" filter="url(#b2)"/>
<!-- nose -->
<ellipse cx="117.500" cy="102" rx="19.500" ry="14.500" fill="#0b0b0c" filter="url(#b1)"/>
<path d="M99 106 C100 112 106 116 112 115" fill="none" stroke="#5e5e61" stroke-width="1.300" filter="url(#b1)"/>
<ellipse cx="117.500" cy="128" rx="26" ry="10" fill="#121212" filter="url(#b2)"/>
</g></svg>
<span class="t" style="left:65.28px;top:237.00px;font-size:9.20px;color:#fff;font-weight:700;transform:scaleX(0.9459);">ANIMALS HAS A LIFE TOO</span>
<span class="t" style="left:65.42px;top:248.00px;font-size:4.10px;color:#fff;font-weight:700;transform:scaleX(0.8132);">A DOCUMENTARY BASED ON TRUE INCIDENTS</span>
<div class="b" style="left:44.20px;top:357.10px;width:237.80px;height:134.40px;background:#fff;border-radius:4.5px;border:1px solid #cfccd6;box-sizing:border-box;box-shadow:0 1.5px 2px rgba(60,50,80,.32);"></div>
<div class="b" style="left:44.20px;top:517.40px;width:237.80px;height:134.40px;background:#fff;border-radius:4.5px;border:1px solid #cfccd6;box-sizing:border-box;box-shadow:0 1.5px 2px rgba(60,50,80,.32);"></div>
<div class="b" style="left:44.20px;top:677.20px;width:237.80px;height:134.40px;background:#fff;border-radius:4.5px;border:1px solid #cfccd6;box-sizing:border-box;box-shadow:0 1.5px 2px rgba(60,50,80,.32);"></div>
<div class="b" style="left:53.90px;top:366.80px;width:70.90px;height:2.30px;background:#2b2b30;"></div>
<div class="b" style="left:127.00px;top:366.80px;width:72.10px;height:2.30px;background:#5da33f;"></div>
<div class="b" style="left:201.00px;top:366.80px;width:71.20px;height:2.30px;background:#93939b;"></div>
<span class="t" style="left:57.80px;top:387.00px;font-size:6.60px;color:#2e2d33;font-weight:700;transform:scaleX(0.9244);">BREEDS</span>
<div class="b" style="left:69.90px;top:406.60px;width:38.00px;height:38.00px;background:#5ba33c;border-radius:50%;"></div>
<div class="b" style="left:143.90px;top:406.60px;width:38.00px;height:38.00px;background:#5ba33c;border-radius:50%;"></div>
<div class="b" style="left:218.10px;top:406.60px;width:38.00px;height:38.00px;background:#5ba33c;border-radius:50%;"></div>
<svg class="b" style="left:78.00px;top:418.00px;" width="22" height="15" viewBox="0 0 22 15"><path d="M1 2.2l2.3 1.6h9.2l2.6-2.6 1.3.1.3 1.3 2.8.9-.5 1.5-2.9.3-1.7 2.6v5.6h-1.6V9.6l-.9.1v3.8h-1.5V9.3H7.2v4.2H5.7V9.6l-.8.2v3.7H3.4V7.4L3 4.6z" fill="#fff"/></svg>
<svg class="b" style="left:150.00px;top:412.00px;" width="28" height="28" viewBox="0 0 28 28"><g fill="#fff"><g transform="translate(8.2,9) rotate(-8)"><ellipse cx="0" cy="1.6" rx="2.7" ry="2.2"/><ellipse cx="-3.3" cy="-.6" rx="1" ry="1.4"/><ellipse cx="-1.3" cy="-2.4" rx="1" ry="1.5"/><ellipse cx="1.3" cy="-2.4" rx="1" ry="1.5"/><ellipse cx="3.3" cy="-.6" rx="1" ry="1.4"/></g><g transform="translate(18.8,19.5) rotate(8)"><ellipse cx="0" cy="1.6" rx="2.7" ry="2.2"/><ellipse cx="-3.3" cy="-.6" rx="1" ry="1.4"/><ellipse cx="-1.3" cy="-2.4" rx="1" ry="1.5"/><ellipse cx="1.3" cy="-2.4" rx="1" ry="1.5"/><ellipse cx="3.3" cy="-.6" rx="1" ry="1.4"/></g></g></svg>
<svg class="b" style="left:226.00px;top:414.00px;" width="22" height="22" viewBox="0 0 22 22"><circle cx="11.3" cy="6" r="4" fill="#fff"/><path d="M2.6 19.6c0-4.6 2.4-6.6 5-7.2l3.6 1.6 3.6-1.6c2.7.6 5 2.600 5 7.200z" fill="#fff"/><path d="M6 19.400c.3-2.700 1.6-3.800 3.300-3.800s3.300 1.200 3.300 3.800M13.500 16.800h3.400" fill="none" stroke="#5ba33c" stroke-width=".9"/></svg>
<span class="t" style="left:58.05px;top:459.00px;font-size:3.95px;color:#2a2a2e;font-weight:700;transform:scaleX(0.9562);">LOREM IPSUM DOLOR SIT AMET,</span>
<span class="t" style="left:57.15px;top:463.00px;font-size:3.95px;color:#2a2a2e;font-weight:700;transform:scaleX(0.9388);">CONSECTETUER ADIPISCING ELIT.</span>
<span class="t" style="left:131.65px;top:459.00px;font-size:3.95px;color:#2a2a2e;font-weight:700;transform:scaleX(0.9677);">NUNC VIVERRA IMPERDIET ENIM.</span>
<span class="t" style="left:133.26px;top:463.00px;font-size:3.95px;color:#2a2a2e;font-weight:700;transform:scaleX(0.9469);">FUSCE EST. VIVAMUS A TELLUS.</span>
<span class="t" style="left:205.36px;top:459.00px;font-size:3.95px;color:#2a2a2e;font-weight:700;transform:scaleX(0.9420);">PELLENTESQUE HABITANT MORBI</span>
<span class="t" style="left:206.56px;top:463.00px;font-size:3.95px;color:#2a2a2e;font-weight:700;transform:scaleX(0.9371);">TRISTIQUE SENECTUS ET NETUS.</span>
<div class="b" style="left:53.90px;top:527.10px;width:70.90px;height:2.30px;background:#2b2b30;"></div>
<div class="b" style="left:127.00px;top:527.10px;width:72.10px;height:2.30px;background:#82b4d4;"></div>
<div class="b" style="left:201.00px;top:527.10px;width:71.20px;height:2.30px;background:#93939b;"></div>
<div class="b" style="left:57.10px;top:533.00px;width:212.90px;height:22.10px;background:#78b7e0;border-radius:3px;"></div>
<span class="t" style="left:60.74px;top:537.00px;font-size:12.40px;color:#fff;transform:scaleX(1.0055);">SmartArt</span>
<svg class="b" style="left:44.30px;top:517.10px;" width="237.4" height="133.8" viewBox="0 0 237.4 133.8"><g fill="none" stroke="#dde2ee" stroke-width="3.2"><path d="M95 59.500L103.500 53.200M135 54L144.200 60.300M150.300 75.200V88.600M88 75.200V88.600M95.700 103.600L104.200 110M135 108.600L143.500 103.600"/></g></svg>
<div class="b" style="left:150.30px;top:564.20px;width:26.20px;height:12.20px;background:#78b7e0;border-radius:1.6px;"></div>
<div class="b" style="left:126.10px;top:579.20px;width:26.20px;height:12.20px;background:#78b7e0;border-radius:1.6px;"></div>
<div class="b" style="left:175.20px;top:579.20px;width:26.20px;height:12.20px;background:#78b7e0;border-radius:1.6px;"></div>
<div class="b" style="left:126.10px;top:607.30px;width:26.20px;height:12.20px;background:#78b7e0;border-radius:1.6px;"></div>
<div class="b" style="left:175.20px;top:607.30px;width:26.20px;height:12.20px;background:#78b7e0;border-radius:1.6px;"></div>
<div class="b" style="left:150.30px;top:621.60px;width:26.20px;height:12.20px;background:#78b7e0;border-radius:1.6px;"></div>
<span class="t" style="left:177.40px;top:582.00px;font-size:6.90px;color:#fff;font-weight:700;transform:scaleX(0.9645);">Step 1</span>
<span class="t" style="left:177.40px;top:610.00px;font-size:6.90px;color:#fff;font-weight:700;transform:scaleX(0.9695);">Step 2</span>
<div class="b" style="left:53.90px;top:686.90px;width:70.90px;height:2.30px;background:#2b2b30;"></div>
<div class="b" style="left:127.00px;top:686.90px;width:72.10px;height:2.30px;background:#82b4d4;"></div>
<div class="b" style="left:201.00px;top:686.90px;width:71.20px;height:2.30px;background:#93939b;"></div>
<div class="b" style="left:69.10px;top:739.40px;width:50.00px;height:53.90px;background:#78b7e0;"></div>
<div class="b" style="left:144.00px;top:739.40px;width:50.00px;height:53.90px;background:#78b7e0;"></div>
<div class="b" style="left:218.00px;top:739.40px;width:50.00px;height:53.90px;background:#78b7e0;"></div>
<div class="b" style="left:132.90px;top:725.30px;width:20.20px;height:20.00px;background:#cfdff0;box-shadow:1px 1px 0 #fff;"></div>
<div class="b" style="left:208.10px;top:725.30px;width:20.20px;height:20.00px;background:#cfdff0;box-shadow:1px 1px 0 #fff;"></div>
<div class="b" style="left:58.90px;top:725.30px;width:19.10px;height:20.10px;background:linear-gradient(180deg,#b0a235 0%,#8f9a33 35%,#5f7f34 65%,#3b3d33 100%);box-shadow:1px 1px 0 #fff;"></div>
<svg class="b" style="left:58.90px;top:725.30px;" width="19.1" height="20.1" viewBox="0 0 19.1 20.1"><path d="M18.500 1.500C15 3 12 6 10.500 9.500l3 -.5 5-4z" fill="#d8c9b8" opacity=".85"/><path d="M10.500 9.500l3-1.700 1.500 3.500z" fill="#6b6a45"/></svg>
<div class="b" style="left:40.80px;top:833.90px;width:244.20px;height:141.20px;background:#fff;border:3px solid #b5362c;border-radius:7.5px;box-sizing:border-box;"></div>
<div class="b" style="left:54.10px;top:846.80px;width:70.60px;height:2.30px;background:#2b2b30;"></div>
<div class="b" style="left:127.10px;top:846.80px;width:71.60px;height:2.30px;background:#82b4d4;"></div>
<div class="b" style="left:201.10px;top:846.80px;width:70.80px;height:2.30px;background:#93939b;"></div>
<span class="t" style="left:57.71px;top:867.00px;font-size:6.70px;color:#2e2d33;font-weight:700;transform:scaleX(0.9235);">SMARTART</span>
<div class="b" style="left:59.90px;top:916.00px;width:8.70px;height:8.30px;background:#76b6df;"></div>
<span class="t" style="left:69.06px;top:911.00px;font-size:21.30px;color:#3c3b41;transform:scaleX(1.0838);">SmartArt</span>
<!-- s_slide -->
<div class="b" style="left:309.00px;top:177.00px;width:1.00px;height:879.00px;background:#cfccd6;"></div>
<div class="b" style="left:311.00px;top:1013.00px;width:1526.00px;height:1.00px;background:repeating-linear-gradient(90deg,#d5d2da 0 35px,transparent 35px 36.5px);"></div>
<span class="t" style="left:323.88px;top:1026.00px;font-size:17.20px;color:#55535a;transform:scaleX(1.0660);">Click to add notes</span>
<div class="b" style="left:385.50px;top:186.50px;width:1440.50px;height:810.30px;background:#fff;box-shadow:1px 1px 0 0 #b0aeb6,0 0 0 1px #c9c6cf;"></div>
<div class="b" style="left:438.80px;top:240.80px;width:437.00px;height:11.10px;background:#465058;"></div>
<div class="b" style="left:886.80px;top:240.80px;width:437.10px;height:11.10px;background:#77b7e0;"></div>
<div class="b" style="left:1335.90px;top:240.80px;width:436.90px;height:11.10px;background:#9a9ca7;"></div>
<span class="t" style="left:464.44px;top:362.00px;font-size:40.00px;color:#3b3a40;font-weight:700;"><i class="l" style="width:24.49px;transform:scaleX(0.9667)">S</i><i class="l" style="width:35.81px;transform:scaleX(1.1429)">M</i><i class="l" style="width:27.00px;transform:scaleX(0.9590)">A</i><i class="l" style="width:26.20px;transform:scaleX(0.9055)">R</i><i class="l" style="width:20.38px;transform:scaleX(0.8941)">T</i><i class="l" style="width:24.51px;transform:scaleX(0.8806)">A</i><i class="l" style="width:26.51px;transform:scaleX(0.9134)">R</i><i class="l" style="width:22.36px;transform:scaleX(0.9153)">T</i></span>
<div class="b" style="left:476.60px;top:660.00px;width:51.20px;height:50.60px;background:#78b8e1;"></div>
<span class="t" style="left:534.57px;top:618.00px;font-size:137.00px;color:#3c3b41;"><i class="l" style="width:88.80px;transform:scaleX(0.9457)">S</i><i class="l" style="width:114.95px;transform:scaleX(0.9805)">m</i><i class="l" style="width:77.23px;transform:scaleX(0.8731)">a</i><i class="l" style="width:47.88px;transform:scaleX(1.0277)">r</i><i class="l" style="width:47.47px;transform:scaleX(1.2509)">t</i><i class="l" style="width:78.85px;transform:scaleX(0.8375)">A</i><i class="l" style="width:47.89px;transform:scaleX(1.0277)">r</i><i class="l" style="width:47.39px;transform:scaleX(1.2452)">t</i></span>
<svg class="b" style="left:466.00px;top:672.90px;" width="38" height="38" viewBox="0 0 38 38"><g transform="translate(19,19)"><path d="M0-15.600L5.300-9.900H1V-1H9.900V-5.300L15.600 0L9.900 5.300V1H1V9.900H5.300L0 15.600L-5.300 9.900H-1V1H-9.900V5.300L-15.600 0L-9.900-5.300V-1H-1V-9.900H-5.300Z" fill="#0a0a0a" stroke="#0a0a0a" stroke-width="2.800" stroke-linejoin="miter"/><path d="M0-15.600L5.300-9.900H1V-1H9.900V-5.300L15.600 0L9.900 5.300V1H1V9.900H5.300L0 15.600L-5.300 9.900H-1V1H-9.900V5.300L-15.600 0L-9.900-5.300V-1H-1V-9.900H-5.300Z" fill="#fbfb2d"/></g></svg>
</body></html>
